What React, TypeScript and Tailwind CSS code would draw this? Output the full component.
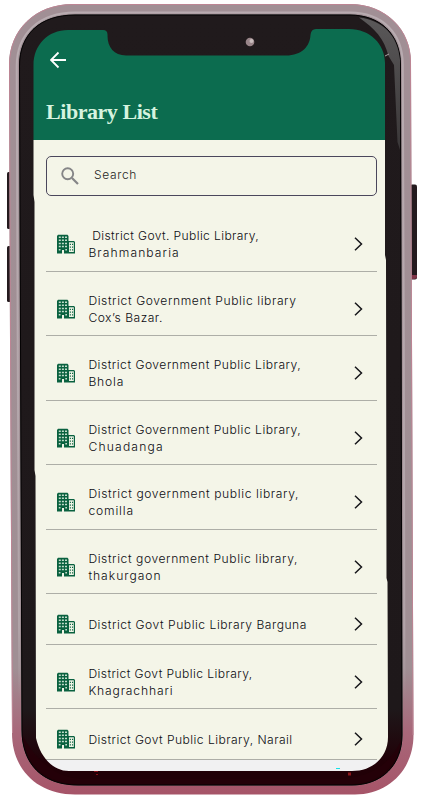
import React from 'react';

interface Line {
  text: string;
  spacing: string;
}

const libraries: Line[][] = [
  [
    { text: ' District Govt. Public Library,', spacing: 'tracking-[0.38px]' },
    { text: 'Brahmanbaria', spacing: 'tracking-[1.1px]' },
  ],
  [
    { text: 'District Government Public library', spacing: 'tracking-[0.59px]' },
    { text: 'Cox’s Bazar.', spacing: 'tracking-[0.5px]' },
  ],
  [
    { text: 'District Government Public Library,', spacing: 'tracking-[0.51px]' },
    { text: 'Bhola', spacing: 'tracking-[0.85px]' },
  ],
  [
    { text: 'District Government Public Library,', spacing: 'tracking-[0.51px]' },
    { text: 'Chuadanga', spacing: 'tracking-[1.2px]' },
  ],
  [
    { text: 'District government public library,', spacing: 'tracking-[0.62px]' },
    { text: 'comilla', spacing: 'tracking-[0.85px]' },
  ],
  [
    { text: 'District government Public library,', spacing: 'tracking-[0.58px]' },
    { text: 'thakurgaon', spacing: 'tracking-[1px]' },
  ],
  [
    { text: 'District Govt Public Library Barguna', spacing: 'tracking-[0.53px]' },
  ],
  [
    { text: 'District Govt Public Library,', spacing: 'tracking-[0.42px]' },
    { text: 'Khagrachhari', spacing: 'tracking-[0.85px]' },
  ],
  [
    { text: 'District Govt Public Library, Narail', spacing: 'tracking-[0.45px]' },
  ],
];

const windowRows = [2.5, 5.6, 8.7, 11.8];

const BuildingIcon = (): JSX.Element => (
  <svg className="h-5 w-[18px] shrink-0" viewBox="0 0 18 20">
    <path d="M0 19.500V2L1 .8h9.500L11.500 2v5h5.500l1 1v11.500H7V16H5v3.500z" fill="#09613f" />
    <path d="M12 8.300h4.800v9.700H12z" fill="#eef3e5" />
    {windowRows.map((y) => (
      <path
        key={y}
        d={`M1.800 ${y}h2v1.500h-2zM4.900 ${y}h2v1.500h-2zM8 ${y}h2v1.500H8z`}
        fill="#c3dccb"
      />
    ))}
    <path d="M1.800 15h1.700v1.400H1.800zM8.300 15H10v1.400H8.300z" fill="#c3dccb" />
    <path d="M5.300 16h1.500v3.500H5.300z" fill="#eef3e5" />
    <path
      d="M12.800 9.700h1.100v1.300h-1.100zM15 9.700h1.100v1.300H15zM12.800 12.500h1.100v1.300h-1.100zM15 12.500h1.100v1.300H15zM12.800 15.300h1.100v1.300h-1.100zM15 15.300h1.100v1.300H15z"
      fill="#09613f"
    />
  </svg>
);

const LibraryRow = ({ lines }: { lines: Line[] }): JSX.Element => (
  <li
    className={`flex items-center border-b border-[#adaea7] pt-[10.5px] pr-[14px] pl-[11px] ${
      lines.length > 1 ? 'h-[64.5px]' : 'h-[50.5px]'
    }`}
  >
    <BuildingIcon />
    <span className="ml-[13.4px] grow text-[12.1px] leading-[17px] font-[350] whitespace-pre">
      {lines.map((line) => (
        <span key={line.text} className={`block ${line.spacing}`}>
          {line.text}
        </span>
      ))}
    </span>
    <svg className="h-[14px] w-[9px] shrink-0" viewBox="0 0 9 14">
      <path
        d="M1 .7l6.500 6.300L1 13.300"
        fill="none"
        stroke="#16161a"
        strokeWidth="1.500"
      />
    </svg>
  </li>
);

const PhoneFrame = (): JSX.Element => (
  <svg
    className="pointer-events-none absolute top-0 left-0 h-[800px] w-[421px]"
    viewBox="0 0 421 800"
  >
    <defs>
      <linearGradient id="metal" x1="0" y1="0" x2="0" y2="1">
        <stop offset="0" stopColor="#a18f95" />
        <stop offset="0.840" stopColor="#a08f94" />
        <stop offset="0.920" stopColor="#a8687a" />
        <stop offset="1" stopColor="#a65468" />
      </linearGradient>
      <linearGradient id="glass" x1="0" y1="0" x2="0" y2="1">
        <stop offset="0" stopColor="#201a1c" />
        <stop offset="0.900" stopColor="#1e181a" />
        <stop offset="0.970" stopColor="#210007" />
        <stop offset="1" stopColor="#210007" />
      </linearGradient>
      <linearGradient id="edge" x1="0" y1="0" x2="0" y2="1">
        <stop offset="0" stopColor="#c2b8bc" stopOpacity="0.700" />
        <stop offset="0.850" stopColor="#c2b8bc" stopOpacity="0.500" />
        <stop offset="0.950" stopColor="#c2b8bc" stopOpacity="0" />
      </linearGradient>
      <linearGradient id="shine" x1="0" y1="0" x2="0" y2="1">
        <stop offset="0" stopColor="#5a5859" />
        <stop offset="1" stopColor="#3a3738" />
      </linearGradient>
    </defs>
    <rect x="7" y="172" width="4" height="57" rx="1.500" fill="#241a1e" />
    <rect x="7" y="246" width="4" height="56" rx="1.500" fill="#241a1e" />
    <rect x="410" y="184.500" width="7" height="95" rx="2" fill="#241a1e" />
    <path d="M412 275h5v1.500q0 2.500-3 2.500h-2z" fill="#7f3548" />
    <path
      fillRule="evenodd"
      fill="url(#metal)"
      d="M9 65C9 30 35 4 73 4H350C386 4 411 30 411 62L412 340L413.500 735C413.500 770 388 794.500 355 794.500H75C38 794.500 12 770 12 733L10 340zM19 66L20 340L21.500 730C21.500 764 42 785.500 78 785.500H352C382 785.500 402.500 765 402.500 735L401 65C401 34 380 14.500 350 14.500H75C40 14.500 19 34 19 66z"
    />
    <path
      d="M12.500 733L10.500 340L9.500 65C9.500 30 35 4.500 73 4.500H350C386 4.500 410.500 30 410.500 62L411.500 340L413 735"
      fill="none"
      stroke="#bd8594"
      strokeWidth="1"
    />
    <path
      d="M19.500 733L17.700 340L16.700 66C16.700 33 40 12.500 75 12.500H350C382 12.500 402.800 33 402.800 65L403.800 340L404.500 735"
      fill="none"
      stroke="url(#edge)"
      strokeWidth="2"
    />
    <path
      fillRule="evenodd"
      fill="url(#glass)"
      d="M19 66C19 34 40 14.500 75 14.500H350C380 14.500 401 34 401 65L402.500 735C402.500 765 382 785.500 352 785.500H78C42 785.500 21.500 764 21.500 730L20 340zM33.500 65V195L34.500 202V470L35.500 476L36 738C40 756 52 771 69 771H352C373 771 388 757 388 737L387.500 582L386.500 578L386 260L385 255V63C385 44 370 29 349 29H316Q311 29 310.500 35C310 46 302 55.500 286 55.500H126C114 55.500 107.500 47 107.500 36Q108 30 103 30H68C48 30 33.500 45 33.500 65z"
    />
    <path
      d="M19.500 66C19.500 34 40 15 75 15H350C380 15 400.500 34 400.500 65L402 735C402 765 382 785 352 785H78C42 785 22 764 22 730L20.500 340z"
      fill="none"
      stroke="#050304"
      strokeWidth="1"
    />
    <path
      d="M359 17.500C382 20 398 35 400 60V150L397.500 142L394 65L388.500 56C384 38 375 29 359 17.500z"
      fill="url(#shine)"
    />
    <path d="M385 56l4-2" stroke="#a8a2a4" strokeWidth="1" />
    <path
      d="M22.500 735C24 762 45 784 78 784H352C380 784 400 762 401.500 739C390 766 370 777 340 779H80C52 777 34 757 22.500 735z"
      fill="#260009"
      opacity="0.700"
    />
    <circle cx="250" cy="42" r="4.300" fill="#998589" />
    <circle cx="251.500" cy="41" r="2" fill="#c9bcbd" />
    <path d="M336 768.500h4" stroke="#16e1e6" strokeWidth="1" />
    <path d="M348 772.500h3v3h-3z" fill="#8d161b" />
    <path d="M94 771.500h4M96 774.500h2" stroke="#861018" strokeWidth="1" />
  </svg>
);

const App = (): JSX.Element => {
  return (
    <div className="relative h-[800px] w-[421px] overflow-hidden bg-white px-[33px] pt-7 font-['Inter',sans-serif] text-[#0c0c12]">
      <div className="flex h-[744px] flex-col bg-[#f4f5e8]">
        <header className="h-28 shrink-0 bg-[#0c6c4f] pt-[23px] pl-[13px]">
          <svg className="ml-1 h-[18px] w-[17px]" viewBox="0 0 17 18">
            <path
              d="M16 9H1.500M8.500 1.500L1 9l7.500 7.500"
              fill="none"
              stroke="#fff"
              strokeWidth="1.800"
            />
          </svg>
          <h1 className="mt-[29px] font-['Liberation_Serif',serif] text-[22px] leading-7 font-bold tracking-[-0.45px] text-[#d6f3df]">
            Library List
          </h1>
        </header>
        <main className="pt-4 pr-[11px] pl-[13px]">
          <div className="flex h-10 items-center rounded-[5px] border border-[#4b475c] pl-[14px]">
            <svg className="h-[18px] w-[18px]" viewBox="0 0 18 18">
              <circle
                cx="6.700"
                cy="6.700"
                r="5.500"
                fill="none"
                stroke="#858587"
                strokeWidth="1.900"
              />
              <path d="M11 11l6 6" stroke="#858587" strokeWidth="2.200" />
            </svg>
            <span className="ml-[15px] pb-[2px] text-[12px] font-[350] tracking-[0.65px] text-[#1f1f24]">
              Search
            </span>
          </div>
          <ul className="mt-[11px]">
            {libraries.map((lines) => (
              <LibraryRow key={lines.map((l) => l.text).join()} lines={lines} />
            ))}
          </ul>
        </main>
        <div className="grow bg-[#f1f1f2]"></div>
      </div>
      <PhoneFrame></PhoneFrame>
    </div>
  );
};

export default App;
